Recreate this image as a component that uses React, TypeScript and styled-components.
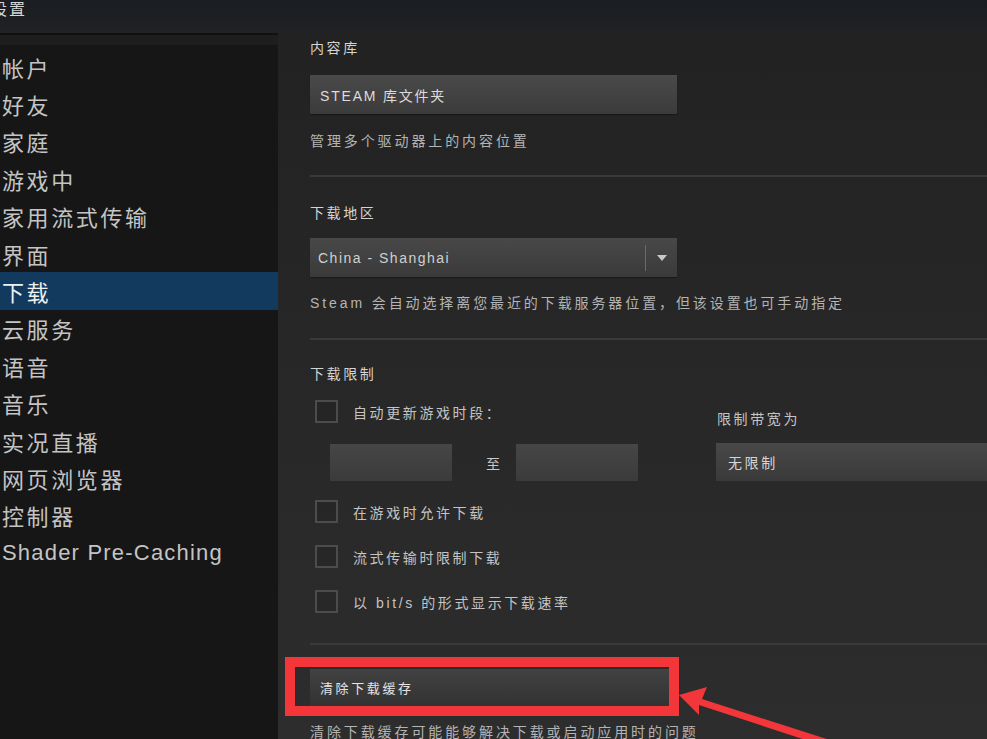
import styled, { createGlobalStyle } from "styled-components";

const GlobalStyle = createGlobalStyle`
  html, body {
    margin: 0;
    padding: 0;
    background: #222;
  }
  * {
    box-sizing: border-box;
  }
`;

const navItems = [
  "帐户",
  "好友",
  "家庭",
  "游戏中",
  "家用流式传输",
  "界面",
  "下载",
  "云服务",
  "语音",
  "音乐",
  "实况直播",
  "网页浏览器",
  "控制器",
  "Shader Pre-Caching",
];

const App = () => {
  return (
    <Window>
      <GlobalStyle />
      <TitleBar>
        <Title>设置</Title>
      </TitleBar>
      <Body>
        <Sidebar>
          <SidebarHeader />
          <NavList>
            {navItems.map((item) => (
              <NavItem key={item} $active={item === "下载"} $latin={item.startsWith("Shader")}>
                {item}
              </NavItem>
            ))}
          </NavList>
        </Sidebar>

        <Content>
          <Label $top={5}>内容库</Label>
          <Button $top={17}>STEAM 库文件夹</Button>
          <Description $top={17}>管理多个驱动器上的内容位置</Description>
          <Divider $top={24} />

          <Label $top={26}>下载地区</Label>
          <Select $top={15}>
            <SelectText>China - Shanghai</SelectText>
            <SelectArrow>
              <svg width="10" height="6" viewBox="0 0 10 6">
                <path d="M0 0 L10 0 L5 6 Z" fill="#c8c8c8" />
              </svg>
            </SelectArrow>
          </Select>
          <Description $top={16}>
            Steam 会自动选择离您最近的下载服务器位置，但该设置也可手动指定
          </Description>
          <Divider $top={25} />

          <Label $top={24}>下载限制</Label>
          <LimitGrid>
            <CheckRow $top={0}>
              <Checkbox />
              <CheckText>自动更新游戏时段：</CheckText>
            </CheckRow>
            <BandwidthLabel>限制带宽为</BandwidthLabel>
            <TimeRange>
              <TimeInput />
              <RangeWord>至</RangeWord>
              <TimeInput />
            </TimeRange>
            <WideField>无限制</WideField>
          </LimitGrid>
          <CheckRow $top={19}>
            <Checkbox />
            <CheckText>在游戏时允许下载</CheckText>
          </CheckRow>
          <CheckRow $top={22}>
            <Checkbox />
            <CheckText>流式传输时限制下载</CheckText>
          </CheckRow>
          <CheckRow $top={22}>
            <Checkbox />
            <CheckText>以 bit/s 的形式显示下载速率</CheckText>
          </CheckRow>
          <Divider $top={30} />

          <Annotated>
            <DarkButton>清除下载缓存</DarkButton>
            <RedBox />
          </Annotated>
          <Description $top={16}>清除下载缓存可能能够解决下载或启动应用时的问题</Description>
        </Content>
      </Body>

      <Arrow width="987" height="739" viewBox="0 0 987 739">
        <path
          d="M679 695 L707 687 L702 699 L833 741 L830 748 L699 705 L699 715 Z"
          fill="#f2363a"
        />
      </Arrow>
    </Window>
  );
};

export default App;

const Window = styled.div`
  position: relative;
  width: 987px;
  height: 739px;
  overflow: hidden;
  display: flex;
  flex-direction: column;
  background: #222;
  font-family: "Liberation Sans", "Noto Sans CJK SC", sans-serif;
`;
const TitleBar = styled.div`
  height: 33px;
  flex-shrink: 0;
  background: linear-gradient(#1a1d21, #202225);
`;
const Title = styled.div`
  margin-left: -9px;
  line-height: 20px;
  font-size: 16px;
  letter-spacing: 2px;
  color: #d6d6d6;
`;
const Body = styled.div`
  flex: 1;
  display: flex;
  min-height: 0;
`;
const Sidebar = styled.nav`
  width: 278px;
  flex-shrink: 0;
  background: #161616;
  border-top: 2px solid #101010;
`;
const SidebarHeader = styled.div`
  height: 10px;
  background: #1e1e1e;
`;
const NavList = styled.div`
  display: flex;
  flex-direction: column;
  padding-top: 3px;
`;
const NavItem = styled.div<{ $active?: boolean; $latin?: boolean }>`
  height: 37.4px;
  flex-shrink: 0;
  display: flex;
  align-items: center;
  padding-left: 2px;
  font-size: 22px;
  letter-spacing: ${(p) => (p.$latin ? "1.2px" : "2.6px")};
  color: ${(p) => (p.$active ? "#f0f0f0" : "#c4c4c4")};
  background: ${(p) => (p.$active ? "#113a5e" : "transparent")};
  white-space: nowrap;
`;
const Content = styled.main`
  flex: 1;
  min-width: 0;
  display: flex;
  flex-direction: column;
  padding-left: 32px;
  background: linear-gradient(#222222, #2d2d2d);
  overflow: hidden;

  > * {
    flex-shrink: 0;
  }
`;
const Label = styled.div<{ $top: number }>`
  margin-top: ${(p) => p.$top}px;
  line-height: 20px;
  font-size: 14px;
  letter-spacing: 2.6px;
  color: #d4d4d4;
`;
const Description = styled.div<{ $top: number }>`
  margin-top: ${(p) => p.$top}px;
  line-height: 20px;
  font-size: 14px;
  letter-spacing: 2.9px;
  color: #b4b4b4;
  white-space: nowrap;
`;
const Divider = styled.div<{ $top: number }>`
  margin-top: ${(p) => p.$top}px;
  height: 2px;
  background: #3a3a3a;
`;
const Button = styled.div<{ $top: number }>`
  margin-top: ${(p) => p.$top}px;
  width: 367px;
  height: 39px;
  display: flex;
  align-items: center;
  padding-left: 10px;
  font-size: 14px;
  letter-spacing: 1.8px;
  color: #dcdcdc;
  background: linear-gradient(#4a4a4a, #3b3b3b);
  box-shadow: 0 1px 1px rgba(0, 0, 0, 0.3);
`;
const Select = styled.div<{ $top: number }>`
  margin-top: ${(p) => p.$top}px;
  width: 367px;
  height: 39px;
  display: flex;
  align-items: center;
  background: linear-gradient(#484848, #3a3a3a);
  box-shadow: 0 1px 1px rgba(0, 0, 0, 0.3);
`;
const SelectText = styled.span`
  flex: 1;
  padding-left: 8px;
  font-size: 14px;
  letter-spacing: 1.5px;
  color: #d0d0d0;
`;
const SelectArrow = styled.span`
  width: 32px;
  height: 26px;
  display: flex;
  align-items: center;
  justify-content: center;
  border-left: 1px solid #6a6a6a;
`;
const LimitGrid = styled.div`
  margin-top: 16px;
  display: grid;
  grid-template-columns: 406px 1fr;
  row-gap: 20px;
  align-items: end;
`;
const CheckRow = styled.div<{ $top: number }>`
  margin-top: ${(p) => p.$top}px;
  display: flex;
  align-items: center;
  gap: 15px;
  padding-left: 5px;
`;
const Checkbox = styled.span`
  width: 23px;
  height: 23px;
  flex-shrink: 0;
  border: 2px solid #4c4c4c;
  background: rgba(0, 0, 0, 0.06);
`;
const CheckText = styled.span`
  font-size: 14px;
  letter-spacing: 2.6px;
  color: #c4c4c4;
  white-space: nowrap;
`;
const BandwidthLabel = styled.div`
  line-height: 20px;
  margin-bottom: -6px;
  padding-left: 1px;
  font-size: 14px;
  letter-spacing: 2.6px;
  color: #c4c4c4;
`;
const TimeRange = styled.div`
  display: flex;
  align-items: center;
  padding-left: 20px;
`;
const TimeInput = styled.span`
  width: 122px;
  height: 37px;
  background: linear-gradient(#464646, #3b3b3b);
`;
const RangeWord = styled.span`
  padding: 0 16px 0 34px;
  font-size: 14px;
  color: #c8c8c8;
`;
const WideField = styled.div`
  width: 300px;
  height: 38px;
  display: flex;
  align-items: center;
  padding-left: 12px;
  font-size: 14px;
  letter-spacing: 2.6px;
  color: #d6d6d6;
  background: linear-gradient(#484848, #3a3a3a);
`;
const Annotated = styled.div`
  position: relative;
  margin-top: 24px;
`;
const DarkButton = styled.div`
  width: 367px;
  height: 37px;
  display: flex;
  align-items: center;
  padding-left: 10px;
  font-size: 13px;
  letter-spacing: 2.6px;
  color: #e4e4e4;
  background: linear-gradient(#424242, #323232);
`;
const RedBox = styled.div`
  position: absolute;
  left: -25px;
  top: -12px;
  width: 394px;
  height: 59px;
  border: 10px solid #f2363a;
`;
const Arrow = styled.svg`
  position: absolute;
  left: 0;
  top: 0;
  pointer-events: none;
`;
